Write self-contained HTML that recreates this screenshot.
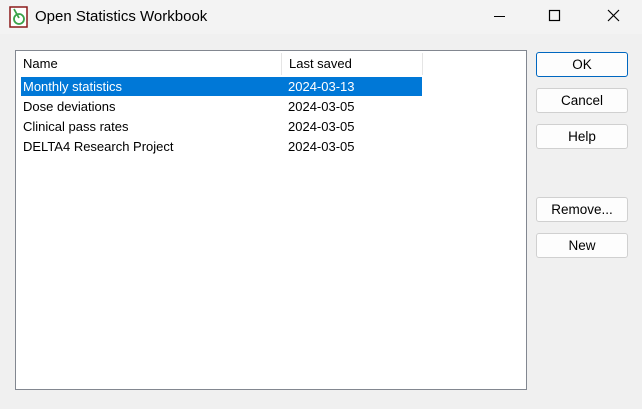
<!DOCTYPE html>
<html><head><style>
body{margin:0;width:642px;height:409px;background:#f0f0f0;font-family:"Liberation Sans",sans-serif;font-size:13px;color:#000;position:relative;overflow:hidden}
.tb{position:absolute;left:0;top:0;width:642px;height:34px;background:#f3f3f3}
.t{position:absolute;left:35px;top:8px;font-size:15px}
.lb{position:absolute;left:15px;top:50px;width:510px;height:338px;background:#fff;border:1px solid #828790}
.hd{position:absolute;top:2px;height:22px;line-height:22px;border-right:1px solid #e5e5e5;padding-left:7px;box-sizing:border-box}
.row{position:absolute;left:5px;width:401px;height:19px;line-height:19px}
.row span{position:absolute}
.sel{background:#0078d7;color:#fff}
.b{position:absolute;left:536px;width:92px;height:25px;background:#fdfdfd;border:1px solid #d0d0d0;border-radius:3px;box-sizing:border-box;text-align:center;line-height:23px;font-size:13.5px}
</style></head><body>
<div class="tb"></div>
<svg style="position:absolute;left:9px;top:6px" width="20" height="22" viewBox="0 0 20 22"><rect x="1" y="1" width="17" height="20" fill="#fff" stroke="#8b1a1a" stroke-width="1.5"/><circle cx="10" cy="13" r="5" fill="none" stroke="#3aa34a" stroke-width="1.8"/><path d="M5 3 L10 12" stroke="#3aa34a" stroke-width="1.8"/></svg>
<div class="t">Open Statistics Workbook</div>
<svg style="position:absolute;left:480px;top:0" width="162" height="34"><path d="M14 16.5H25" stroke="#000" stroke-width="1"/><rect x="69.5" y="10.5" width="10" height="10" fill="none" stroke="#000" stroke-width="1.2"/><path d="M128 10L139 21M139 10L128 21" stroke="#000" stroke-width="1.2"/></svg>
<div class="lb">
<div class="hd" style="left:0;width:266px">Name</div>
<div class="hd" style="left:266px;width:141px">Last saved</div>
<div class="row sel" style="top:26px"><span style="left:2px">Monthly statistics</span><span style="left:267px">2024-03-13</span></div>
<div class="row" style="top:46px"><span style="left:2px">Dose deviations</span><span style="left:267px">2024-03-05</span></div>
<div class="row" style="top:66px"><span style="left:2px">Clinical pass rates</span><span style="left:267px">2024-03-05</span></div>
<div class="row" style="top:86px"><span style="left:2px">DELTA4 Research Project</span><span style="left:267px">2024-03-05</span></div>
</div>
<div class="b" style="top:52px;border:1px solid #0067c0">OK</div>
<div class="b" style="top:88px">Cancel</div>
<div class="b" style="top:124px">Help</div>
<div class="b" style="top:197px">Remove...</div>
<div class="b" style="top:233px">New</div>
</body></html>
